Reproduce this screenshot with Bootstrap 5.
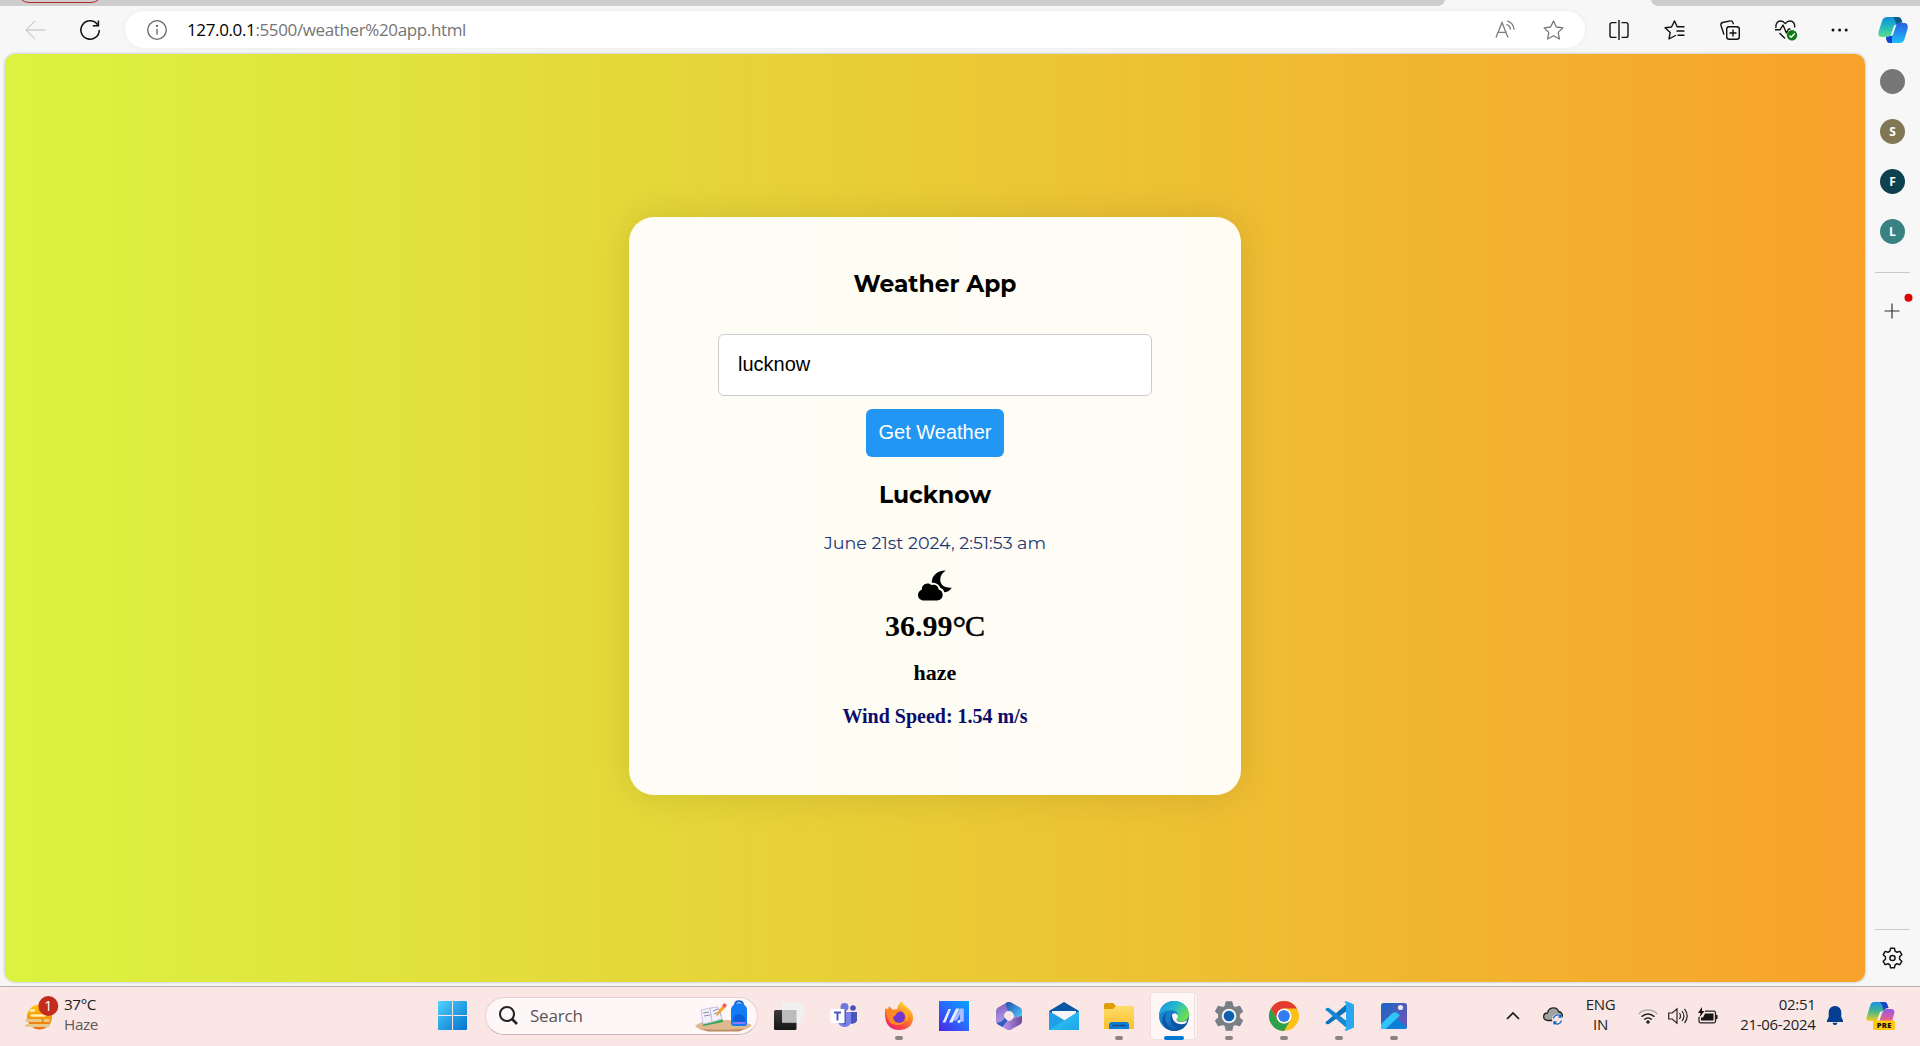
<!DOCTYPE html>
<html lang="en">
<head>
<meta charset="utf-8">
<meta name="viewport" content="width=device-width, initial-scale=1">
<title>Weather App</title>
<link href="https://cdn.jsdelivr.net/npm/bootstrap@5.3.0/dist/css/bootstrap.min.css" rel="stylesheet">
<style>
  body { background:#f7f7f7; font-family:"Segoe UI","Open Sans","Noto Sans",sans-serif; color:#1b1b1b; }
  svg { display:block; flex:none; overflow:visible; }
  .desk { width:1920px; height:1046px; }
  .tab-strip { height:6px; }
  .strip-left { width:1445px; background:#cdcdcd; border-bottom-right-radius:10px 8px; padding-left:17px; }
  .strip-right { width:269px; background:#cdcdcd; border-bottom-left-radius:10px 8px; }
  .tab-pill { width:86px; height:30px; margin-top:-27px; border:1.5px solid #b3282b; border-radius:12px; }
  .toolbar { height:47px; padding-left:25px; }
  .refresh { margin-left:35px; }
  .address { width:1460px; height:37px; background:#fff; margin-left:25px; padding:0 21px 0 22px; box-shadow:0 0 5px rgba(0,0,0,.06); }
  .address-text { font-size:17px; letter-spacing:-.37px; color:#757575; white-space:nowrap; margin-left:20px; }
  .address-text b { font-weight:400; color:#000; }
  .star { margin-left:28px; }
  .tool-icons { gap:35px; margin-left:24px; }
  .health { margin-right:-2px; }
  .copilot { margin-left:-7px; }
  .viewport { width:1860px; height:928px; margin:1px 0 0 5px; border-radius:10px; background:linear-gradient(90deg,#dbf340,#f8a22b); box-shadow:0 0 3px rgba(0,0,0,.3); }
  .weather-card { width:612px; height:578px; margin-bottom:-1px; margin-top:-25px; padding-top:49px; border-radius:25px; background:rgba(255,255,255,.95); box-shadow:0 0 38px rgba(0,0,0,.11); color:#000; }
  .title-text { font-family:Montserrat,Inter,sans-serif; font-weight:700; font-size:23.4px; line-height:36px; margin:0; }
  .city-input { width:434px; height:62px; margin-top:32px; padding:0 19px 1px; font:20px "Liberation Sans",sans-serif; color:#000; border:1px solid #ccc; border-radius:6px; }
  .get-btn { width:138px; height:48px; margin-top:13px; padding:0 0 2px; font:20px "Liberation Sans",sans-serif; color:#fff; background:#2196f3; border:0; border-radius:6px; }
  .city-name { margin-top:20px; }
  .date-text { font-family:Montserrat,Inter,sans-serif; font-size:17.5px; line-height:26px; color:#1c3577; margin-top:17px; }
  .moon { margin-top:14px; }
  .temp-text,.desc-text,.wind-text { font-family:"Liberation Serif",serif; font-weight:700; white-space:nowrap; }
  .temp-text { font-size:30px; line-height:36px; margin-top:7px; }
  .temp-unit { font-weight:400; -webkit-text-stroke:.5px #000; }
  .temp-ring { font-size:34px; line-height:0; vertical-align:-3px; letter-spacing:-1px; }
  .desc-text { font-size:22px; line-height:28px; margin-top:15px; }
  .wind-text { font-size:20px; line-height:24px; margin-top:17px; color:#0b0b6b; }
  .sidebar { width:55px; padding-top:16px; }
  .site-dot { width:25px; height:25px; margin-bottom:25px; border-radius:50%; color:#fff; font-size:12px; font-weight:700; }
  .side-line { width:35px; height:1px; background:#c9c9c9; }
  .first-line { margin-top:3px; }
  .plus { margin-top:22px; margin-right:1px; }
  .side-cog { margin:17px 0 17px; }
  .taskbar { height:60px; background:#fae7e5; border-top:1px solid #b9acac; padding-bottom:2px; }
  .wx { width:438px; padding-left:25px; }
  .wx-text { font-size:15.3px; line-height:20px; margin:-3px 0 0 12px; letter-spacing:-.4px; }
  .wx-sub { color:#5f5858; }
  .search { width:273px; height:38px; margin-left:18px; background:#fef7f7; border:1px solid #e6cfce; border-bottom-color:#cbb6b6; padding-left:13px; padding-right:5px; }
  .search-label { font-size:17px; color:#5a5555; margin-left:12px; letter-spacing:-.2px; }
  .apps { margin-left:3.5px; }
  .app { width:55px; height:59px; position:relative; padding-top:15px; }
  .run::after { content:""; position:absolute; bottom:5px; left:23.5px; width:8px; height:4px; border-radius:2px; background:#8c8282; }
  .run.active::after { width:20px; left:17.5px; background:#0078d4; }
  .app.active::before { content:""; position:absolute; left:3.5px; top:6px; width:48px; height:48px; border-radius:5px; background:linear-gradient(90deg,#fff7f6 43px,#ecdcdc 43px,#ecdcdc 44px,#fdf3f2 44px); border:1px solid #efe0df; }
  .app.active svg { position:relative; }
  .tray { margin-left:84px; font-size:15px; line-height:20px; letter-spacing:-.3px; color:#222; }
  .cloud { margin-left:23px; }
  .lang { width:40px; margin:-4px 0 0 18px; }
  .wifi { margin-left:17px; }
  .tray-gap { margin-left:10px; }
  .clock { width:88px; margin:-4px 0 0 10px; }
  .bell { margin-left:11px; }
  .pre { margin-left:23px; }
</style>
</head>
<body>
<svg width="0" height="0" class="position-absolute" aria-hidden="true">
  <defs>
    <linearGradient id="gWin" x2="1" y2="1"><stop stop-color="#4fd2fb"/><stop offset="1" stop-color="#0472cf"/></linearGradient>
    <linearGradient id="gSun" x2="0" y2="1"><stop stop-color="#ffc708"/><stop offset="1" stop-color="#ef6a0c"/></linearGradient>
    <linearGradient id="gFox" x1=".8" x2=".2" y2="1"><stop stop-color="#fff04a"/><stop offset=".4" stop-color="#ff8a1e"/><stop offset="1" stop-color="#f5156c"/></linearGradient>
    <linearGradient id="gArm" x1="1" x2="0" y2="1"><stop stop-color="#04a6ff"/><stop offset=".5" stop-color="#2a68ff"/><stop offset="1" stop-color="#4a26e0"/></linearGradient>
    <linearGradient id="gOffA" x2=".3" y2="1"><stop stop-color="#7c58b4"/><stop offset=".5" stop-color="#9f86dc"/><stop offset="1" stop-color="#b9a6f0"/></linearGradient>
    <linearGradient id="gOffB" x2="1" y2="1"><stop stop-color="#1f4fa8"/><stop offset=".6" stop-color="#3f9fe4"/><stop offset="1" stop-color="#5ad7f5"/></linearGradient>
    <linearGradient id="gOffC" x2="1" y2="0"><stop stop-color="#c59af0"/><stop offset="1" stop-color="#6a4a9c"/></linearGradient>
    <linearGradient id="gMail" x2="1" y2="1"><stop stop-color="#35d0f7"/><stop offset="1" stop-color="#1ea4e8"/></linearGradient>
    <linearGradient id="gFold" x2="0" y2="1"><stop stop-color="#ffdc68"/><stop offset="1" stop-color="#fbc02c"/></linearGradient>
    <linearGradient id="gEdgeA" x2="1" y2=".6"><stop stop-color="#1a8fdd"/><stop offset=".5" stop-color="#27b8cf"/><stop offset="1" stop-color="#6de04a"/></linearGradient>
    <linearGradient id="gEdgeB" x2="1" y2="1"><stop stop-color="#1d9de6"/><stop offset="1" stop-color="#0a4fa0"/></linearGradient>
    <linearGradient id="gPhoto" x2="1" y2=".6"><stop stop-color="#1668c8"/><stop offset="1" stop-color="#6556b4"/></linearGradient>
    <linearGradient id="gPeak" x2="1" y2="1"><stop stop-color="#29c8f6"/><stop offset="1" stop-color="#35c2f5"/></linearGradient>
    <linearGradient id="gCopA" x2="0" y2="1"><stop stop-color="#0f8fe0"/><stop offset=".45" stop-color="#1fb5c0"/><stop offset="1" stop-color="#5bdd8c"/></linearGradient>
    <linearGradient id="gCopB" x2="0" y2="1"><stop stop-color="#2a5fe0"/><stop offset="1" stop-color="#1dc0fb"/></linearGradient>
    <linearGradient id="gPreA" x2="0" y2="1"><stop stop-color="#1995e6"/><stop offset=".5" stop-color="#48b68a"/><stop offset="1" stop-color="#f2cf20"/></linearGradient>
    <linearGradient id="gPreB" x2="0" y2="1"><stop stop-color="#9a52ea"/><stop offset="1" stop-color="#f3657a"/></linearGradient>
    <linearGradient id="gView" x2="0" y2="1"><stop stop-color="#3b3b3b"/><stop offset="1" stop-color="#161616"/></linearGradient>
    <path id="cog" d="M12.3 1h5.4l1 4.300 2.600 1.500 4.200-1.300 2.800 4.800-3.200 3v3.400l3.200 3-2.800 4.800-4.200-1.300-2.600 1.500-1 4.300h-5.400l-1-4.300-2.600-1.500-4.200 1.300-2.800-4.800 3.200-3v-3.400l-3.200-3 2.800-4.800 4.200 1.300 2.600-1.500z"/>
  </defs>
</svg>

<div class="desk d-flex flex-column overflow-hidden">
  <header>
    <div class="tab-strip d-flex justify-content-between overflow-hidden">
      <div class="strip-left"><div class="tab-pill"></div></div>
      <div class="strip-right"></div>
    </div>
    <nav class="toolbar d-flex align-items-center">
      <svg width="20" height="20" viewBox="0 0 20 20" fill="none" stroke="#cfcfcf" stroke-width="1.3"><path d="M20 10H1M10 1 1 10l9 9"/></svg>
      <svg width="20" height="20" viewBox="0 0 20 20" fill="none" stroke="#111" stroke-width="1.5" class="refresh"><path d="M17.5 4.600A9.200 9.200 0 1 0 19.300 10M18.400.5v5.200h-5.600"/></svg>
      <div class="address rounded-pill d-flex align-items-center">
        <svg width="20" height="20" viewBox="0 0 20 20" fill="none" stroke="#666" stroke-width="1.3"><circle cx="10" cy="10" r="9.3"/><path d="M10 8.700v6"/><circle cx="10" cy="5.900" r=".5" fill="#666"/></svg>
        <div class="address-text flex-grow-1"><b>127.0.0.1</b>:5500/weather%20app.html</div>
        <svg width="20" height="20" viewBox="0 0 20 20" fill="none" stroke="#7b7b7b" stroke-width="1.300"><path d="M1 17.500 7 2.500l6 15M3.200 12.400h7.600M12.300.8c4 1.400 6.400 4.600 6.900 9M11.500 4.300c2.300.9 3.700 2.700 4.100 5.300"/></svg>
        <svg class="star" width="21" height="20" viewBox="0 0 21 20" fill="none" stroke="#777" stroke-width="1.300" stroke-linejoin="round"><path d="m10.500 1 2.900 6 6.500.9-4.700 4.500 1.200 6.600-5.900-3.200L4.600 19l1.200-6.600L1.100 7.900 7.600 7z"/></svg>
      </div>
      <div class="tool-icons d-flex align-items-center">
        <svg width="20" height="20" viewBox="0 0 20 20" fill="none" stroke="#111" stroke-width="1.400"><path d="M7.500 2.600H3A2 2 0 0 0 1 4.600v10.800a2 2 0 0 0 2 2h4.500M12.500 2.600H17a2 2 0 0 1 2 2v10.800a2 2 0 0 1-2 2h-4.500M10 0v20"/></svg>
        <svg width="21" height="20" viewBox="0 0 21 20" fill="none" stroke="#111" stroke-width="1.400" stroke-linejoin="round" stroke-linecap="round"><path d="m11.500 15.500-6.500 3.500 1.200-6.600L1 7.700 7.500 7l3-6 2.600 5.500M13 6.700h7M13 11h7M14 15.200h6"/></svg>
        <svg width="20" height="20" viewBox="0 0 20 20" fill="none" stroke="#111" stroke-width="1.400" stroke-linejoin="round"><rect x="6.700" y="6.700" width="12.600" height="12.600" rx="2.500"/><path d="M13 9.500v7M9.500 13h7M4 14.600 1 5.500a2.500 2.500 0 0 1 1.600-3L10.300.9a2.500 2.500 0 0 1 2.600 1.700l.6 1.700"/></svg>
        <svg class="health" width="22" height="20" viewBox="0 0 22 20" fill="none" stroke="#111" stroke-width="1.400" stroke-linejoin="round"><path d="M1 8C.3 3.500 2.800 1 5.600 1 7.500 1 9 2 10.300 3.600 11.600 2 13.100 1 15 1c2.800 0 5.400 2.500 4.500 6.500M0 9.800h5L8 5l3.400 8 2.100-4h2M4.500 13l5.500 5.500"/><circle cx="17" cy="15.300" r="5.200" fill="#0f7b16" stroke="none"/><path d="m14.500 15.500 1.700 1.700 3.500-3.700" stroke="#fff"/></svg>
        <svg width="20" height="20" viewBox="0 0 20 20" fill="#111"><circle cx="3" cy="10" r="1.500"/><circle cx="9.600" cy="10" r="1.500"/><circle cx="16.200" cy="10" r="1.500"/></svg>
        <svg class="copilot" width="30" height="28" viewBox="0 0 30 28"><path d="M9.500 1H20c2 0 3 1.500 3.500 3l1 2.500c-4 0-5 1-6 4l-2.500 7C15 20 13 21 10 21H3.500C.5 21 0 18 .8 15L4 5c1-3 2.500-4 5.500-4z" fill="url(#gCopA)"/><path d="M15 1h5c2 0 3 1.500 3.500 3l1 2.500c-4 0-5 1-6 3.500C17.500 6 17 3 15 1z" fill="#095a85"/><path d="M21 27h-9c-2 0-3-1-3.500-3L8 21c4 0 5.500-1 6.500-4l2.500-7c1-2.500 2-3 5-3h4.500C29.500 7 30.200 10 29.500 13l-3 10c-1 3-2.500 4-5.500 4z" fill="url(#gCopB)"/><path d="M14 27h-2c-2 0-3-1-3.500-3L8 21c3.500 0 5-1 6-3z" fill="#1740d8"/><path d="M18.500 8.500 15 18.500c-.5 1-1 1.500-2.500 1.500l3-9c.5-1.500 1.500-2.300 3-2.500z" fill="#e9f8fa"/></svg>
      </div>
    </nav>
  </header>

  <div class="d-flex flex-grow-1">
    <main class="viewport d-flex align-items-center justify-content-center">
      <section class="weather-card d-flex flex-column align-items-center text-center">
        <h1 class="title-text">Weather App</h1>
        <input class="city-input" type="text" value="lucknow" aria-label="City">
        <button class="get-btn" type="button">Get Weather</button>
        <h2 class="title-text city-name">Lucknow</h2>
        <div class="date-text">June 21st 2024, 2:51:53 am</div>
        <svg class="moon" width="34" height="31" viewBox="0 0 34 31"><path d="M6 30.500C2.500 30.500 0 28.200 0 25c0-2.600 1.500-4.500 3.800-5.200C3.600 16.500 6 13.500 9.500 13.500c1.600 0 3 .6 4 1.600 3.400-1.300 7 .9 7.200 4.500 2.300.6 4 2.600 4 5.200 0 3.200-2.400 5.700-5.700 5.700z"/><path d="M27.800.4C20 0 13.500 5 13.800 12.700c2.500-.2 6.300.3 8.500 5 2 .8 3.200 2 4 4.500 3.200.2 5.600-1.700 7.500-4.400-8 .5-12.600-3.600-11.400-10C23 4.600 25 2.200 27.800.4z"/></svg>
        <div class="temp-text">36.99<span class="temp-unit"><span class="temp-ring">°</span>C</span></div>
        <div class="desc-text">haze</div>
        <div class="wind-text">Wind Speed: 1.54 m/s</div>
      </section>
    </main>
    <aside class="sidebar d-flex flex-column align-items-center">
      <div class="site-dot" style="background:#777"></div>
      <div class="site-dot d-flex align-items-center justify-content-center" style="background:#817754">S</div>
      <div class="site-dot d-flex align-items-center justify-content-center" style="background:#0e4150">F</div>
      <div class="site-dot d-flex align-items-center justify-content-center" style="background:#388284">L</div>
      <div class="side-line first-line"></div>
      <svg class="plus" width="36" height="24" viewBox="0 0 36 24"><path d="M10.500 16h15M18 8.500v15" stroke="#333" stroke-width="1.200"/><circle cx="34.500" cy="2.800" r="4" fill="#e00000"/></svg>
      <div class="side-line mt-auto"></div>
      <svg class="side-cog" width="21" height="22" viewBox="0 0 30 30" fill="none" stroke="#111" stroke-width="2.100" stroke-linejoin="round"><use href="#cog"/><circle cx="15" cy="15" r="3.700"/></svg>
    </aside>
  </div>

  <footer class="taskbar d-flex align-items-center">
    <div class="wx d-flex align-items-center">
      <svg width="27" height="30" viewBox="0 0 27 30"><circle cx="14.500" cy="16" r="12.500" fill="url(#gSun)"/><path d="M1.500 19.500h14M20 19.500h3.500M1.500 24.500h22" stroke="#e5ca8c" stroke-width="3" stroke-linecap="round"/><path d="M6 9.500h3M6.500 14.500h13" stroke="#fff0ad" stroke-width="2.600" stroke-linecap="round"/><circle cx="23.300" cy="5" r="10" fill="#c42b1c"/><text x="23.300" y="10" font-size="14" text-anchor="middle" fill="#fff">1</text></svg>
      <div class="wx-text"><div>37°C</div><div class="wx-sub">Haze</div></div>
    </div>
    <svg width="29" height="29" viewBox="0 0 29 29"><path fill="url(#gWin)" d="M0 1a1 1 0 0 1 1-1h13v14H0zM15 0h13a1 1 0 0 1 1 1v13H15zM0 15h14v14H1a1 1 0 0 1-1-1zM15 15h14v13a1 1 0 0 1-1 1H15z"/></svg>
    <div class="search rounded-pill d-flex align-items-center">
      <svg width="19" height="19" viewBox="0 0 19 19" fill="none" stroke="#222" stroke-width="2"><circle cx="8" cy="8" r="7"/><path d="m13 13 5 5" stroke-width="2.500"/></svg>
      <span class="search-label">Search</span>
      <svg class="ms-auto" width="57" height="32" viewBox="0 0 57 32"><path d="M0 26c6-5 14-6 27-6s24 2 30 5c-4 4-9 6-15 6H15c-7 0-12-2-15-5z" fill="#dfb88f"/><path d="M6 29c10 1 30 1 43 0l-5 2.500H13z" fill="#b98b5f"/><path d="m7 12 18-3 3 13-20 4z" fill="#34a853"/><path d="m6 10 9-2 2 14-9 2zM15 8l8-1 4 12-10 3z" fill="#f4f1fb" stroke="#c9c2e4"/><path d="m8 13 6-1m-5 4 6-1m3-4 5-2m-4 5 5-2" stroke="#8f8bb0"/><path d="M21 15 27 6l3 2-8 8z" fill="#f7a325"/><path d="m27 6 2-3 3 2-2 3z" fill="#ee5a5a"/><path d="M40 5c0-5 8-5 8 0" stroke="#1767c8" stroke-width="2" fill="none"/><path d="M36 10c0-9 16-9 16 0v13c0 3-2 3-3 3H39c-2 0-3-1-3-3z" fill="#117cf5"/><path d="M38 18c2-5 10-5 12 0v5H38z" fill="#0a5fdb"/><path d="M38 23h12" stroke="#8d7bf0" stroke-width="2"/></svg>
    </div>
    <div class="apps d-flex">
      <div class="app d-flex justify-content-center"><svg width="30" height="30" viewBox="0 0 30 30"><rect y="9" width="22.500" height="20" rx="1.500" fill="url(#gView)"/><rect x="8" y="1.500" width="22" height="20" rx="1" fill="#f1f0f0" opacity=".97"/><path d="M8 9h14.500v12.500H8z" fill="#bcbcbc"/></svg></div>
      <div class="app d-flex justify-content-center"><svg width="30" height="30" viewBox="0 0 30 30"><circle cx="15.500" cy="6" r="4" fill="#7077dc"/><circle cx="24" cy="7" r="2.800" fill="#4c50b8"/><path d="M20 11h8v9a6 6 0 0 1-8 2z" fill="#4b53bc"/><path d="M9 11h13v9c0 4-3 6-6.500 6S9 23.500 9 20z" fill="#7b83eb"/><rect x="14" y="9" width="3" height="14.500" fill="#565bb0"/><rect x="1.500" y="8" width="14" height="14" fill="#fff"/><path d="M5 11.500h7M8.500 11.500v8" stroke="#5257b5" stroke-width="2"/></svg></div>
      <div class="app run d-flex justify-content-center"><svg width="30" height="30" viewBox="0 0 30 30"><path d="M1.500 7 4 9l1-4 4 4 4-.5c1-4 2-6 5-8.500 1 5 8 6 10.500 13C31 23 24 29 15 29S-1 23 1.500 7z" fill="url(#gFox)"/><circle cx="15" cy="16" r="6" fill="#7136d0"/><path d="M2 8c5 0 5 1 7 1 3-1 5 0 7 2-2 0-4 1-4 3l-3 2c0 5 7 9 13 3-2 6-13 7-17 1-2-4-3-8-3-12z" fill="#ff8a23"/><path d="M17 9c4 1 7 7 4 12 5-3 4-10-1-13z" fill="#ffae25"/></svg></div>
      <div class="app d-flex justify-content-center"><svg width="30" height="30" viewBox="0 0 30 30"><path d="M0 0h30v30H0z" fill="url(#gArm)"/><path d="M3.500 21.500 9.500 8H12L6.500 21.500zM10 21.500 17 7.500h3.500l-7 14z" fill="#e6eaff"/><path d="M19.500 10.500 21 7.500h3.800v13H21V13l-3.500 6.500h-3z" fill="#a9bdff"/><circle cx="20" cy="20.500" r="1.500" fill="#fff"/></svg></div>
      <div class="app d-flex justify-content-center"><svg width="30" height="30" viewBox="0 0 30 30"><path fill-rule="evenodd" d="M13 1.500a4 4 0 0 1 4 0l9 5a4 4 0 0 1 2 3.500v10a4 4 0 0 1-2 3.500l-9 5a4 4 0 0 1-4 0l-9-5A4 4 0 0 1 2 20V10a4 4 0 0 1 2-3.500zM15 10a5 5 0 1 0 0 10 5 5 0 0 0 0-10z" fill="url(#gOffA)"/><path d="m12 1.800 1-.3a4 4 0 0 1 4 0l9 5a4 4 0 0 1 2 3.500v9l-8-4.500a5 5 0 0 0-5-4.500c-2 0-3-4-3-8.700z" fill="url(#gOffB)"/><path d="M28 15v5a4 4 0 0 1-2 3.500l-9 5a4 4 0 0 1-4 0L8 25.500l5.500-5.800a5 5 0 0 0 6-2.700z" fill="url(#gOffC)"/><path d="M2.500 21.500c3 .5 7-1.500 8-5l3 3.200L8.500 26 4 23.500a4 4 0 0 1-1.500-2z" fill="#2f5fc0"/></svg></div>
      <div class="app d-flex justify-content-center"><svg width="30" height="30" viewBox="0 0 30 30"><path d="M0 10 15 1l15 9v4H0z" fill="#0a57a6"/><path d="M3 10h24v8H3z" fill="#f5f4f6"/><path d="m0 10 15 9v10H0z" fill="#1e9fe8"/><path d="M30 10 0 29h30z" fill="url(#gMail)"/></svg></div>
      <div class="app run d-flex justify-content-center"><svg width="30" height="30" viewBox="0 0 30 30"><path d="M0 4c0-1 .7-2 2-2h7l3 3h16v6H0z" fill="#df9e04"/><path d="M0 8h9l3-3h16c1.300 0 2 .7 2 2v21H0z" fill="url(#gFold)"/><path d="M5 28v-4c0-2 1-3 3-3h14c2 0 3 1 3 3v4z" fill="#0d7bcf"/><path d="M8 24.500h14" stroke="#095392" stroke-width="1.500"/></svg></div>
      <div class="app run active d-flex justify-content-center"><svg width="30" height="30" viewBox="0 0 30 30"><circle cx="15" cy="15" r="15" fill="url(#gEdgeB)"/><path d="M.2 13C1 5 7 0 15 0c9 0 15 6 15 13 0 5-3.500 7.500-7.500 7.500-3.500 0-5-1-5-2.200 0-.8 1.500-1.500 1.500-4 0-3-3.500-5-7.500-5C6.500 9.300 1 11 .2 16z" fill="url(#gEdgeA)"/><path d="M8 11c-5 8 1 17 12 18-8-3-10-9-7-16 1 5 2 9 10 10 2 0 4-.5 5.500-1.300C26 27 21 30 15 30 4 30-1 17 8 11z" fill="#0d55a5"/><path d="M13 14c1.500-3 5-2 6 .5 0 2.500-1.500 3-1.500 4 0 1.500 2 2.300 5 2.300 3 0 4.500-.8 5.800-1.800-.5 1.500-1 2.500-2 3.500-5 2-13 0-13.300-8.500z" fill="#fff6f5"/></svg></div>
      <div class="app run d-flex justify-content-center"><svg width="30" height="30" viewBox="0 0 30 30"><use href="#cog" fill="#788086" stroke="#788086" stroke-width="1.500" stroke-linejoin="round"/><circle cx="15" cy="15" r="7.300" fill="#eef0f2"/><circle cx="15" cy="15" r="5.300" fill="#0d5fb0"/></svg></div>
      <div class="app run d-flex justify-content-center"><svg width="30" height="30" viewBox="0 0 30 30"><circle cx="15" cy="15" r="15" fill="#fbc116"/><path d="M2 7.500A15 15 0 0 1 28 7.500H15L8.500 18.700z" fill="#e33b2e"/><path d="M2 7.500A15 15 0 0 0 15 30l6.500-11.300A7.500 7.500 0 0 1 8.500 18.700z" fill="#2da04c"/><circle cx="15" cy="15" r="7.500" fill="#fff"/><circle cx="15" cy="15" r="5.900" fill="#347df0"/></svg></div>
      <div class="app run d-flex justify-content-center"><svg width="30" height="30" viewBox="0 0 30 30"><path d="m3 20 19-16.500v7L5 23c-1 .6-2 .5-3-.5S1.500 20.800 3 20z" fill="#0873bb"/><path d="m3 10 19 16.500v-7L5 7c-1-.6-2-.5-3 .5S1.500 9.200 3 10z" fill="#1387d2"/><path d="m22 0 7 3c.7.300 1 1 1 1.800v20.400c0 .8-.3 1.500-1 1.800l-7 3-2-1.500c1.500 0 2-.5 2-1.500V3c0-1-.5-1.500-2-1.500z" fill="#2ba7f2"/></svg></div>
      <div class="app run d-flex justify-content-center"><svg width="30" height="30" viewBox="0 0 30 30"><clipPath id="ph"><rect x="2" y="2" width="26" height="26" rx="2.500"/></clipPath><g clip-path="url(#ph)"><path d="M2 2h26v26H2z" fill="url(#gPhoto)"/><path d="M4 29 17 16l12 11v3z" fill="#0d7fd6"/><path d="M2 23 13 12.500c2-1.800 4-1.800 6 0l2 2L6.500 28H2z" fill="url(#gPeak)"/></g><circle cx="21.500" cy="6.500" r="2.600" fill="#e9e6f5"/></svg></div>
    </div>
    <div class="tray d-flex align-items-center">
      <svg width="14" height="8" viewBox="0 0 14 8" fill="none" stroke="#1a1a1a" stroke-width="1.700"><path d="m1 7 6-6 6 6"/></svg>
      <svg class="cloud" width="20" height="18" viewBox="0 0 20 18"><path d="M5 13.500C-1 13.500-.5 6 4.500 6 6-.5 14-.5 15.500 4.500 19 5 20 8 19 10.500 18 13 16 13.500 14 13.500z" fill="#a2a2a2" stroke="#222" stroke-width="1.300"/><circle cx="14.500" cy="12.500" r="5.500" fill="#fae7e5"/><path d="M10.500 11.500a4.300 4.300 0 0 1 7.500-2v-2m0 2.500h-2.500M18.500 13.500a4.300 4.300 0 0 1-7.500 2v2m0-2.500h2.500" fill="none" stroke="#0a66c2" stroke-width="1.300"/></svg>
      <div class="lang text-center">ENG<br>IN</div>
      <svg class="wifi" width="20" height="16" viewBox="0 0 20 16" fill="none" stroke="#222" stroke-width="1.500"><path d="M.7 6a13 13 0 0 1 18.600 0" stroke="#b5a9a9"/><path d="M3.500 8.800a9 9 0 0 1 13 0M6.300 11.600a5.200 5.200 0 0 1 7.400 0"/><circle cx="10" cy="14" r="1.800" fill="#222" stroke="none"/></svg>
      <svg class="tray-gap" width="20" height="16" viewBox="0 0 20 16" fill="none" stroke="#222" stroke-width="1.200"><path d="M.7 5h3.500L9 .8v14.400L4.200 11H.7zM11.500 5c1.300 2 1.300 4 0 6M14 3c2.500 3.300 2.500 6.700 0 10M16.500.8c3.500 4.700 3.500 9.700 0 14.400"/></svg>
      <svg class="tray-gap" width="20" height="16" viewBox="0 0 20 16"><path d="M7 3.200h9a1.500 1.500 0 0 1 1.500 1.500v8.600a1.500 1.500 0 0 1-1.500 1.500H2.500A1.500 1.500 0 0 1 1 13.300V9" fill="none" stroke="#222" stroke-width="1.300"/><path d="M7 5.500h8.500v7H3V9.500h2zM18 7h1.500v4H18zM4-1 0 5h2.500L1.500 9.500 6.500 3H4z" fill="#151515"/></svg>
      <div class="clock text-end">02:51<br>21-06-2024</div>
      <svg class="bell" width="16" height="19" viewBox="0 0 16 19" fill="#043f91"><path d="M8 0c4 0 6.300 3 6.300 6.500V11l1.700 3.500V16H0v-1.500L1.700 11V6.500C1.700 3 4 0 8 0zM5.500 16.700h5C10 18.200 9.200 19 8 19s-2-.8-2.500-2.300z"/></svg>
      <svg class="pre" width="30" height="28" viewBox="0 0 30 28"><path d="M8 0h10c2 0 3 1 3.500 3l1 3c-4 0-5 2-6 5l-1.500 5c-1 2-2 3-5 3H3c-3 0-3-2-2-5L4 4c1-3 2-4 4-4z" fill="url(#gPreA)"/><path d="M14 0h4c2 0 3 1 3.500 3l1 3c-3 0-4 1-5 3C17 5 16 2 14 0z" fill="#1743c7"/><path d="M13 20 17 10c1-2 2-3 4-3h4c3 0 4 2 3 5l-2 8z" fill="url(#gPreB)"/><path d="m16.500 9-3.500 10h-2l3-9z" fill="#fff5f4"/><rect x="7" y="18.500" width="22" height="9.500" rx="1.500" fill="#ffc80c"/><text x="18.200" y="26" font-size="7.600" font-weight="800" letter-spacing=".3" text-anchor="middle" fill="#111">PRE</text></svg>
    </div>
  </footer>
</div>
<script src="https://cdn.jsdelivr.net/npm/bootstrap@5.3.0/dist/js/bootstrap.bundle.min.js"></script>
</body>
</html>
